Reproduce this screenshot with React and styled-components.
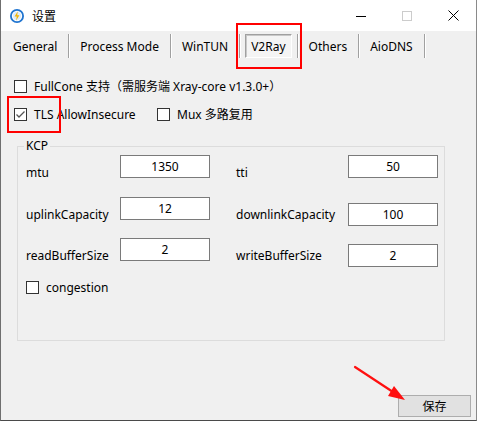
import React from "react";
import styled, { createGlobalStyle } from "styled-components";

const GlobalStyle = createGlobalStyle`
  html, body {
    margin: 0;
    padding: 0;
    background: #f0f0f0;
  }
  * {
    box-sizing: border-box;
  }
`;

const Window = styled.div`
  position: relative;
  width: 477px;
  height: 421px;
  display: flex;
  flex-direction: column;
  background: #f0f0f0;
  border-left: 1px solid #6f6f6f;
  border-right: 1px solid #8a8a8a;
  border-bottom: 1px solid #4a4a4a;
  font-family: "Noto Sans", "Noto Sans CJK SC", sans-serif;
  font-size: 12px;
  color: #000;
`;

const TitleBar = styled.div`
  height: 31px;
  flex: none;
  display: flex;
  align-items: center;
  background: #fff;
  padding-left: 8px;
`;

const Title = styled.span`
  margin-left: 7px;
  font-family: "Noto Sans CJK SC", sans-serif;
  font-size: 12px;
  line-height: 16px;
`;

const Controls = styled.div`
  margin-left: auto;
  display: flex;
  height: 100%;
`;

const ControlButton = styled.div`
  width: 46px;
  height: 100%;
  display: flex;
  align-items: center;
  justify-content: center;
`;

const Body = styled.div`
  flex: 1;
  display: flex;
  flex-direction: column;
`;

const TabStrip = styled.div`
  display: flex;
  align-items: center;
  padding: 3px 0 0 6px;
  height: 27px;
`;

const Tab = styled.div`
  position: relative;
  height: 24px;
  padding: 0 5px;
  display: flex;
  align-items: center;
  border: 1px solid transparent;
  ${(p) =>
    p.$active &&
    `
    border-color: #a0a0a0 #ffffff #ffffff #a0a0a0;
    background: #f4f4f4;
    box-shadow: inset 1px 1px 0 #c8c8c8;
  `}
  ${(p) =>
    p.$marked &&
    `
    &::after {
      content: "";
      position: absolute;
      top: -12px;
      left: -10px;
      right: -11px;
      bottom: -12px;
      border: 2px solid #ff0000;
    }
  `}
`;

const Separator = styled.div`
  width: 1px;
  height: 24px;
  margin: 0 5px;
  background: #a0a0a0;
  box-shadow: 1px 0 0 #ffffff;
`;

const Options = styled.div`
  display: flex;
  flex-direction: column;
  gap: 11px;
  margin: 20px 0 0 13px;
`;

const OptionRow = styled.div`
  display: flex;
  align-items: center;
  height: 17px;
`;

const Check = styled.label`
  position: relative;
  display: flex;
  align-items: center;
  gap: 7px;
  line-height: 17px;
  width: ${(p) => (p.$width ? `${p.$width}px` : "auto")};
  white-space: nowrap;
  ${(p) =>
    p.$marked &&
    `
    &::after {
      content: "";
      position: absolute;
      top: -10px;
      left: -7px;
      width: 50px;
      height: 33px;
      border: 2px solid #ff0000;
    }
  `}
`;

const Box = styled.span`
  width: 13px;
  height: 13px;
  flex: none;
  border: 1px solid #333;
  background: #fff;
  display: flex;
  align-items: center;
  justify-content: center;
`;

const GroupBox = styled.div`
  position: relative;
  margin: 23px 0 0 16px;
  width: 428px;
  height: 195px;
  border: 1px solid #dcdcdc;
  padding: 8px 0 0 8px;
`;

const Legend = styled.span`
  position: absolute;
  top: -9px;
  left: 6px;
  padding: 0 2px;
  background: #f0f0f0;
  line-height: 16px;
`;

const FieldGrid = styled.div`
  display: grid;
  grid-template-columns: 94px 90px 26px 112px 90px;
  grid-template-rows: 42px 41px 41px;
`;

const FieldLabel = styled.div`
  padding-top: 10px;
  line-height: 16px;
  grid-column: ${(p) => p.$col};
`;

const Input = styled.div`
  grid-column: ${(p) => p.$col};
  margin-top: ${(p) => p.$shift || 0}px;
  width: 90px;
  height: 23px;
  border: 1px solid #7a7a7a;
  background: #fff;
  display: flex;
  align-items: center;
  justify-content: center;
  line-height: 16px;
`;

const Footer = styled.div`
  display: flex;
  justify-content: flex-end;
  margin: 54px 5px 0 0;
`;

const Button = styled.div`
  width: 73px;
  height: 22px;
  border: 1px solid #adadad;
  background: #e1e1e1;
  display: flex;
  align-items: center;
  justify-content: center;
  font-family: "Noto Sans CJK SC", sans-serif;
  line-height: 16px;
`;

const Arrow = styled.svg`
  position: absolute;
  left: 0;
  top: 0;
  pointer-events: none;
`;

function AppIcon() {
  return (
    <svg width="16" height="16" viewBox="0 0 16 16">
      <circle cx="8" cy="8" r="7" fill="#1f74d0" />
      <circle cx="8" cy="8" r="5.2" fill="#ffffff" />
      <circle cx="8" cy="8" r="4.2" fill="#dcebfa" />
      <path d="M8.8 3.2 L5.6 8.6 L7.8 8.6 L7 12.8 L10.4 7.2 L8.2 7.2 Z" fill="#f4b400" />
    </svg>
  );
}

function CheckBox({ checked, children, ...rest }) {
  return (
    <Check {...rest}>
      <Box>
        {checked && (
          <svg width="11" height="11" viewBox="0 0 11 11">
            <polyline points="1.5,5.5 4,8 9.5,2.5" fill="none" stroke="#555" strokeWidth="1.3" />
          </svg>
        )}
      </Box>
      <span>{children}</span>
    </Check>
  );
}

const tabs = ["General", "Process Mode", "WinTUN", "V2Ray", "Others", "AioDNS"];

const fields = [
  { left: ["mtu", "1350"], right: ["tti", "50"], shift: 0 },
  { left: ["uplinkCapacity", "12"], right: ["downlinkCapacity", "100"], shift: 6 },
  { left: ["readBufferSize", "2"], right: ["writeBufferSize", "2"], shift: 6 },
];

export default function App() {
  return (
    <>
      <GlobalStyle />
      <Window>
        <TitleBar>
          <AppIcon />
          <Title>设置</Title>
          <Controls>
            <ControlButton>
              <svg width="10" height="10" viewBox="0 0 10 10">
                <line x1="0" y1="5.5" x2="10" y2="5.5" stroke="#000" strokeWidth="1" />
              </svg>
            </ControlButton>
            <ControlButton>
              <svg width="10" height="10" viewBox="0 0 10 10">
                <rect x="0.5" y="0.5" width="9" height="9" fill="none" stroke="#cccccc" strokeWidth="1" />
              </svg>
            </ControlButton>
            <ControlButton>
              <svg width="11" height="11" viewBox="0 0 11 11">
                <path d="M0.5 0.5 L10.5 10.5 M10.5 0.5 L0.5 10.5" stroke="#000" strokeWidth="1" />
              </svg>
            </ControlButton>
          </Controls>
        </TitleBar>
        <Body>
          <TabStrip>
            {tabs.map((t) => (
              <React.Fragment key={t}>
                <Tab $active={t === "V2Ray"} $marked={t === "V2Ray"}>
                  {t}
                </Tab>
                <Separator />
              </React.Fragment>
            ))}
          </TabStrip>
          <Options>
            <OptionRow>
              <CheckBox>FullCone 支持（需服务端 Xray-core v1.3.0+）</CheckBox>
            </OptionRow>
            <OptionRow>
              <CheckBox checked $marked $width={143}>
                TLS AllowInsecure
              </CheckBox>
              <CheckBox>Mux 多路复用</CheckBox>
            </OptionRow>
          </Options>
          <GroupBox>
            <Legend>KCP</Legend>
            <FieldGrid>
              {fields.map((f) => (
                <React.Fragment key={f.left[0]}>
                  <FieldLabel $col={1}>{f.left[0]}</FieldLabel>
                  <Input $col={2}>{f.left[1]}</Input>
                  <FieldLabel $col={4}>{f.right[0]}</FieldLabel>
                  <Input $col={5} $shift={f.shift}>
                    {f.right[1]}
                  </Input>
                </React.Fragment>
              ))}
            </FieldGrid>
            <OptionRow>
              <CheckBox>congestion</CheckBox>
            </OptionRow>
          </GroupBox>
          <Footer>
            <Button>保存</Button>
          </Footer>
        </Body>
        <Arrow width="477" height="421" viewBox="0 0 477 421">
          <line x1="354" y1="367" x2="392" y2="392" stroke="#ff1010" strokeWidth="2.2" strokeLinecap="round" />
          <polygon points="404,400 387,396 393,386" fill="#ff1010" />
        </Arrow>
      </Window>
    </>
  );
}
